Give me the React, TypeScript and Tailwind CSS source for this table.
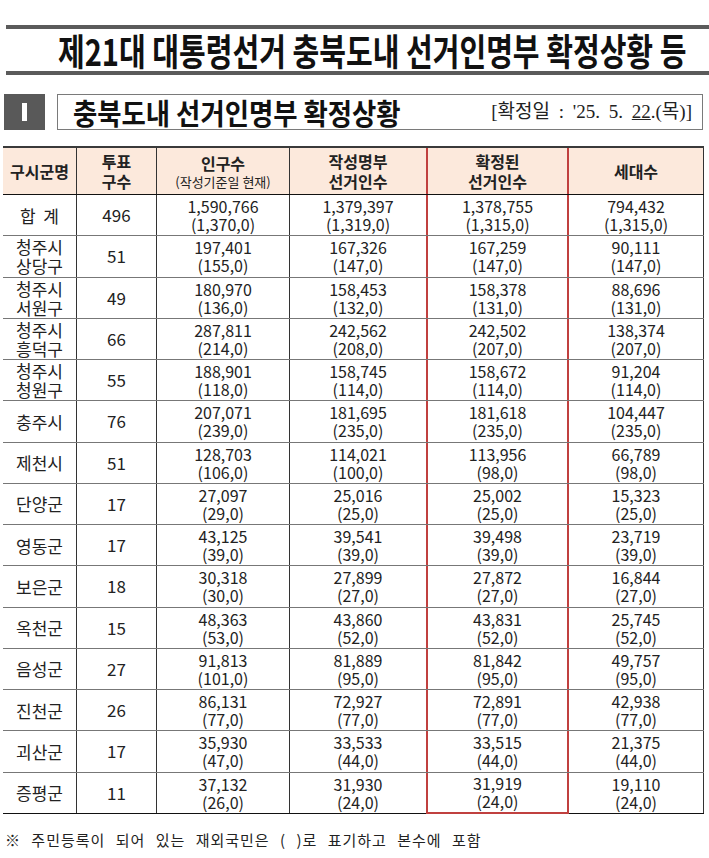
import React from "react";

type Row = { name: string[]; n: string; cols: [string, string][] };

const rows: Row[] = [
  { name: ["합 계"], n: "496", cols: [["1,590,766", "(1,370,0)"], ["1,379,397", "(1,319,0)"], ["1,378,755", "(1,315,0)"], ["794,432", "(1,315,0)"]] },
  { name: ["청주시", "상당구"], n: "51", cols: [["197,401", "(155,0)"], ["167,326", "(147,0)"], ["167,259", "(147,0)"], ["90,111", "(147,0)"]] },
  { name: ["청주시", "서원구"], n: "49", cols: [["180,970", "(136,0)"], ["158,453", "(132,0)"], ["158,378", "(131,0)"], ["88,696", "(131,0)"]] },
  { name: ["청주시", "흥덕구"], n: "66", cols: [["287,811", "(214,0)"], ["242,562", "(208,0)"], ["242,502", "(207,0)"], ["138,374", "(207,0)"]] },
  { name: ["청주시", "청원구"], n: "55", cols: [["188,901", "(118,0)"], ["158,745", "(114,0)"], ["158,672", "(114,0)"], ["91,204", "(114,0)"]] },
  { name: ["충주시"], n: "76", cols: [["207,071", "(239,0)"], ["181,695", "(235,0)"], ["181,618", "(235,0)"], ["104,447", "(235,0)"]] },
  { name: ["제천시"], n: "51", cols: [["128,703", "(106,0)"], ["114,021", "(100,0)"], ["113,956", "(98,0)"], ["66,789", "(98,0)"]] },
  { name: ["단양군"], n: "17", cols: [["27,097", "(29,0)"], ["25,016", "(25,0)"], ["25,002", "(25,0)"], ["15,323", "(25,0)"]] },
  { name: ["영동군"], n: "17", cols: [["43,125", "(39,0)"], ["39,541", "(39,0)"], ["39,498", "(39,0)"], ["23,719", "(39,0)"]] },
  { name: ["보은군"], n: "18", cols: [["30,318", "(30,0)"], ["27,899", "(27,0)"], ["27,872", "(27,0)"], ["16,844", "(27,0)"]] },
  { name: ["옥천군"], n: "15", cols: [["48,363", "(53,0)"], ["43,860", "(52,0)"], ["43,831", "(52,0)"], ["25,745", "(52,0)"]] },
  { name: ["음성군"], n: "27", cols: [["91,813", "(101,0)"], ["81,889", "(95,0)"], ["81,842", "(95,0)"], ["49,757", "(95,0)"]] },
  { name: ["진천군"], n: "26", cols: [["86,131", "(77,0)"], ["72,927", "(77,0)"], ["72,891", "(77,0)"], ["42,938", "(77,0)"]] },
  { name: ["괴산군"], n: "17", cols: [["35,930", "(47,0)"], ["33,533", "(44,0)"], ["33,515", "(44,0)"], ["21,375", "(44,0)"]] },
  { name: ["증평군"], n: "11", cols: [["37,132", "(26,0)"], ["31,930", "(24,0)"], ["31,919", "(24,0)"], ["19,110", "(24,0)"]] },
];

const grid = "grid grid-cols-[74px_80px_133px_136px_143px_135px]";
const font = { fontFamily: '"Noto Sans CJK KR", "Noto Sans", sans-serif' };

export default function App() {
  return (
    <div className="w-[709px] h-[858px] bg-white text-[#222] overflow-hidden" style={font}>
      {/* Title */}
      <div className="pt-[25px]">
        <div className="ml-[6px] h-[4px] bg-[#5b5b5b]" />
        <div className="h-[42px] flex items-center pl-[58px]">
          <span className="text-[37px] leading-[42px] font-bold text-[#111] whitespace-nowrap scale-x-[0.785] origin-left inline-block">
            제21대 대통령선거 충북도내 선거인명부 확정상황 등
          </span>
        </div>
        <div className="ml-[6px] h-[4px] bg-[#5b5b5b]" />
      </div>

      {/* Section header */}
      <div className="mt-[19px] flex h-[36px] pl-[4px] pr-[6px]">
        <div className="w-[41px] h-[36px] bg-[#595959] flex items-center justify-center">
          <div className="w-[5px] h-[18px] bg-white" />
        </div>
        <div className="ml-[12px] flex-1 border border-[#7a7a7a] flex items-center justify-between pl-[15px] pr-[10px]">
          <span className="text-[29px] font-bold text-[#111] whitespace-nowrap scale-x-[0.91] origin-left inline-block leading-none">
            충북도내 선거인명부 확정상황
          </span>
          <span className="text-[19px] text-[#222] whitespace-nowrap [word-spacing:4px]" style={{ fontFamily: '"Liberation Serif", "Noto Sans CJK KR", serif' }}>
            [확정일 : '25. 5. <span className="underline">22</span>.(목)]
          </span>
        </div>
      </div>

      {/* Table */}
      <div className="mt-[16px] ml-[3px] w-[701px]">
        {/* header */}
        <div className={`${grid} h-[49px] bg-[#fce9dc] border-t-2 border-t-[#3a3a3a] border-b-[1.5px] border-b-[#111] text-[16px] font-bold leading-[20px] text-[#222]`}>
          <div className="flex items-center justify-center border-r border-[#333]">구시군명</div>
          <div className="flex flex-col items-center justify-center border-r border-[#333]"><span>투표</span><span>구수</span></div>
          <div className="flex flex-col items-center justify-center border-r border-[#333]"><span>인구수</span><span className="text-[13px] leading-[17px] font-normal">(작성기준일 현재)</span></div>
          <div className="flex flex-col items-center justify-center"><span>작성명부</span><span>선거인수</span></div>
          <div className="flex flex-col items-center justify-center border-x-2 border-[#c0403f]"><span>확정된</span><span>선거인수</span></div>
          <div className="flex items-center justify-center border-r border-[#333]">세대수</div>
        </div>
        {rows.map((r, i) => {
          const last = i === rows.length - 1;
          return (
            <div key={i} className={`${grid} h-[41.25px] ${last ? "border-b-[1.5px] border-b-[#111]" : "border-b border-b-[#777]"} text-[16px] leading-[18px]`}>
              <div className="flex flex-col items-center justify-center border-r border-[#333] text-[17px] leading-[19px]">
                {r.name.map((t, j) => (
                  <span key={j} className="whitespace-pre">{t === "합 계" ? "합  계" : t}</span>
                ))}
              </div>
              <div className="flex items-center justify-center border-r border-[#333] text-[17px]">{r.n}</div>
              {r.cols.map((c, k) => (
                <div
                  key={k}
                  className={`flex flex-col items-center justify-center ${
                    k === 0 ? "border-r border-[#333]" : k === 2 ? `border-x-2 border-[#c0403f] ${last ? "border-b-2 border-b-[#c0403f] -mb-[1.5px]" : ""}` : k === 3 ? "border-r border-[#333]" : ""
                  }`}
                >
                  <span>{c[0]}</span>
                  <span>{c[1]}</span>
                </div>
              ))}
            </div>
          );
        })}
      </div>

      {/* Footer */}
      <div className="mt-[15px] ml-[5px] text-[15px] text-[#222] tracking-[1px] [word-spacing:6px] whitespace-nowrap">
        ※ 주민등록이 되어 있는 재외국민은 ( )로 표기하고 본수에 포함
      </div>
    </div>
  );
}
